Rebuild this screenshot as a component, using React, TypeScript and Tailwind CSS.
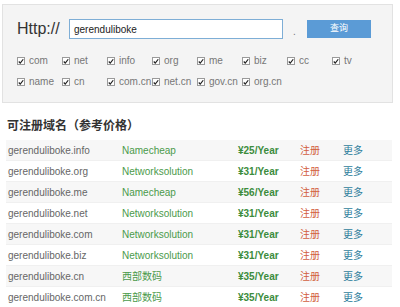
const tlds1 = ["com", "net", "info", "org", "me", "biz", "cc", "tv"];
const tlds2 = ["name", "cn", "com.cn", "net.cn", "gov.cn", "org.cn"];

const rows = [
  { domain: "gerenduliboke.info", provider: "Namecheap", price: "¥25/Year" },
  { domain: "gerenduliboke.org", provider: "Networksolution", price: "¥31/Year" },
  { domain: "gerenduliboke.me", provider: "Namecheap", price: "¥56/Year" },
  { domain: "gerenduliboke.net", provider: "Networksolution", price: "¥31/Year" },
  { domain: "gerenduliboke.com", provider: "Networksolution", price: "¥31/Year" },
  { domain: "gerenduliboke.biz", provider: "Networksolution", price: "¥31/Year" },
  { domain: "gerenduliboke.cn", provider: "西部数码", price: "¥35/Year" },
  { domain: "gerenduliboke.com.cn", provider: "西部数码", price: "¥35/Year" },
];

function Check({ label }: { label: string }) {
  return (
    <label className="flex w-[45px] items-center gap-[4px] text-[10px] leading-none text-[#777]">
      <span className="flex h-[8px] w-[8px] items-center justify-center border border-[#9a9a9a] bg-white">
        <svg viewBox="0 0 8 8" className="h-[7px] w-[7px]">
          <path d="M1 4 L3 6.2 L7 1" fill="none" stroke="#222" strokeWidth="1.6" />
        </svg>
      </span>
      {label}
    </label>
  );
}

export default function App() {
  return (
    <div className="h-[307px] w-[400px] overflow-hidden bg-white font-['Liberation_Sans','Noto_Sans_CJK_SC',sans-serif]">
      <div className="ml-[2px] mt-[4px] h-[99px] w-[391px] border border-[#e2e2e2] bg-[#f4f4f4] pl-[14px] pt-[14px]">
        <div className="flex items-center">
          <span className="w-[52px] text-[16px] leading-none text-[#333]">Http://</span>
          <div className="flex h-[20px] w-[214px] items-center border border-[#7eaed6] bg-white px-[4px] text-[10px] text-[#222]">
            gerenduliboke
          </div>
          <span className="ml-[10px] w-[14px] pt-[4px] text-[10px] text-[#777]">.</span>
          <button className="flex h-[18px] w-[64px] items-center justify-center bg-[#5b9bd6] text-[9px] text-white">
            查询
          </button>
        </div>
        <div className="mt-[17px] flex">
          {tlds1.map((t) => (
            <Check key={t} label={t} />
          ))}
        </div>
        <div className="mt-[11px] flex">
          {tlds2.map((t) => (
            <Check key={t} label={t} />
          ))}
        </div>
      </div>
      <div className="ml-[7px] mt-[17px] text-[12px] font-bold leading-none text-[#333]">
        可注册域名（参考价格）
      </div>
      <div className="ml-[6px] mt-[8px] w-[386px]">
        {rows.map((r, i) => (
          <div
            key={r.domain}
            className={`flex h-[21px] items-center border-b border-[#f0f0f0] text-[10px] ${i % 2 === 0 ? "bg-[#f7f7f7]" : "bg-white"}`}
          >
            <span className="w-[116px] pl-[2px] text-[#666]">{r.domain}</span>
            <span className="w-[116px] text-[#4b9a4b]">{r.provider}</span>
            <span className="w-[62px] font-bold text-[#3c8c3c]">{r.price}</span>
            <span className="w-[43px] text-[#d2603f]">注册</span>
            <span className="text-[#2f7e9c]">更多</span>
          </div>
        ))}
      </div>
    </div>
  );
}
